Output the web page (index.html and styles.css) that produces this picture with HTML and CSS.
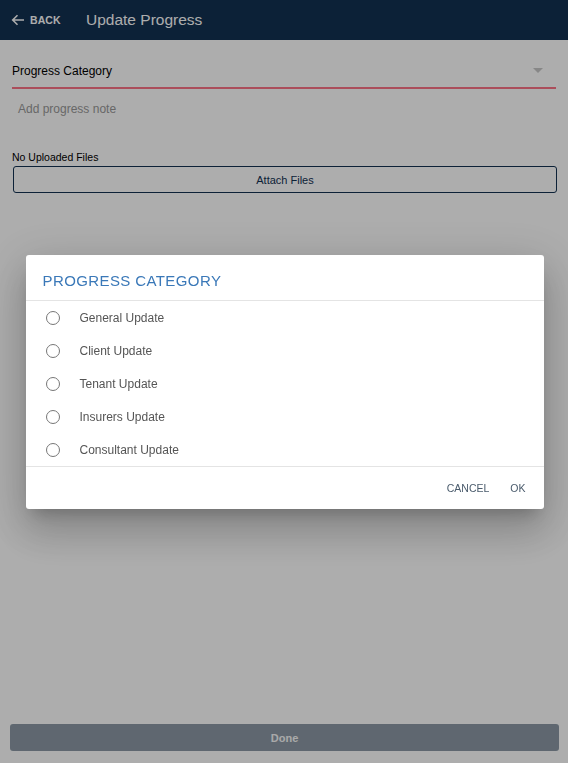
FILE: index.html
```html
<!DOCTYPE html>
<html>
<head>
<meta charset="utf-8">
<link rel="stylesheet" href="styles.css">
</head>
<body>
<div class="app">
  <header class="toolbar">
    <div class="back">
      <svg width="14" height="12" viewBox="0 0 14 12"><path d="M13 6H2M6.5 1.2L1.7 6l4.8 4.8" fill="none" stroke="#fff" stroke-width="1.6"/></svg>
      <span>BACK</span>
    </div>
    <div class="title">Update Progress</div>
  </header>
  <main class="content">
    <div class="select">
      <span>Progress Category</span>
      <span class="caret"></span>
    </div>
    <div class="note">Add progress note</div>
    <div class="files">No Uploaded Files</div>
    <button class="attach">Attach Files</button>
  </main>
  <footer class="footer">
    <button class="done">Done</button>
  </footer>
</div>
<div class="backdrop"></div>
<div class="dialog-wrap">
  <div class="dialog">
    <h2 class="dialog-title">PROGRESS CATEGORY</h2>
    <div class="options">
      <label class="opt"><span class="radio"></span>General Update</label>
      <label class="opt"><span class="radio"></span>Client Update</label>
      <label class="opt"><span class="radio"></span>Tenant Update</label>
      <label class="opt"><span class="radio"></span>Insurers Update</label>
      <label class="opt"><span class="radio"></span>Consultant Update</label>
    </div>
    <div class="actions">
      <span class="act">CANCEL</span>
      <span class="act">OK</span>
    </div>
  </div>
</div>
</body>
</html>
```

FILE: styles.css
```css
* { box-sizing: border-box; }
html, body { margin: 0; padding: 0; height: 100%; }
body {
  font-family: "Liberation Sans", Arial, sans-serif;
  background: #fff;
  overflow: hidden;
}
.app {
  height: 763px;
  display: flex;
  flex-direction: column;
}
.toolbar {
  height: 40px;
  background: #123152;
  display: flex;
  align-items: center;
  color: #fff;
  padding-left: 11px;
}
.back {
  display: flex;
  align-items: center;
  gap: 5px;
  font-size: 10.5px;
  font-weight: 700;
  letter-spacing: 0.1px;
  width: 75px;
}
.title {
  font-size: 15.5px;
}
.content {
  flex: 1;
  padding: 0 12px;
}
.select {
  margin-top: 20px;
  height: 29px;
  border-bottom: 2px solid #fc7486;
  display: flex;
  align-items: center;
  justify-content: space-between;
  font-size: 12px;
  color: #000;
  padding-bottom: 6px;
}
.caret {
  width: 0; height: 0;
  border-left: 5px solid transparent;
  border-right: 5px solid transparent;
  border-top: 5px solid #c8c8c8;
  margin-right: 13px;
}
.note {
  margin-top: 13px;
  padding-left: 6px;
  font-size: 12px;
  color: #999;
}
.files {
  margin-top: 35px;
  font-size: 10.5px;
  color: #000;
}
.attach {
  display: block;
  width: 544px;
  margin: 3px 0 0 1px;
  height: 27px;
  background: #fff;
  border: 1.5px solid #123152;
  border-radius: 3px;
  color: #123152;
  font-family: inherit;
  font-size: 11px;
}
.footer {
  padding: 0 9px 12px 10px;
}
.done {
  width: 100%;
  height: 27px;
  border: none;
  border-radius: 3px;
  background: #8c99a6;
  color: #fafafa;
  font-family: inherit;
  font-size: 11px;
  font-weight: 700;
}
.backdrop {
  position: fixed;
  inset: 0;
  background: rgba(0,0,0,0.32);
}
.dialog-wrap {
  position: fixed;
  inset: 0;
  display: flex;
  align-items: center;
  justify-content: center;
  padding-top: 1px;
}
.dialog {
  width: 518px;
  margin-left: 1px;
  background: #fff;
  border-radius: 3px;
  box-shadow: 0 11px 15px -7px rgba(0,0,0,.2), 0 24px 38px 3px rgba(0,0,0,.14), 0 9px 46px 8px rgba(0,0,0,.12);
}
.dialog-title {
  margin: 0;
  padding: 17px 17px 11px;
  font-size: 15px;
  font-weight: 400;
  letter-spacing: 0.4px;
  color: #3a78b8;
  border-bottom: 1px solid #e4e4e4;
}
.options {
  padding: 0 0 0 20px;
  border-bottom: 1px solid #e4e4e4;
}
.opt {
  display: flex;
  align-items: center;
  height: 33px;
  font-size: 12px;
  color: #555;
}
.radio {
  width: 14px;
  height: 14px;
  border: 1.5px solid #777;
  border-radius: 50%;
  margin-right: 20px;
}
.actions {
  height: 42px;
  display: flex;
  justify-content: flex-end;
  align-items: center;
  gap: 21px;
  padding-right: 18px;
}
.act {
  font-size: 10.5px;
  color: #4a5b6c;
}
```
